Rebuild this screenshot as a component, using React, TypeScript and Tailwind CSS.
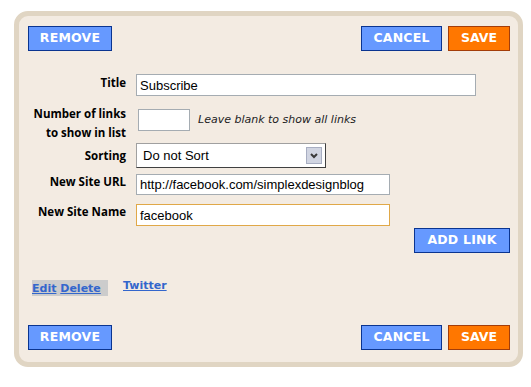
import React from 'react';

const labelFont = { fontFamily: '"DejaVu Sans", sans-serif' };
const formLabelFont = { fontFamily: '"Open Sans", "DejaVu Sans", sans-serif' };

function BlueButton({ label, className = '' }: { label: string; className?: string }) {
  return (
    <button
      className={`h-[25px] bg-[#6699ff] border border-[#0a3490] text-white font-bold text-[12.5px] tracking-[0.2px] font-['Verdana','DejaVu_Sans',sans-serif] flex items-center justify-center ${className}`}
    >
      {label}
    </button>
  );
}

function SaveButton() {
  return (
    <button className="h-[25px] w-[62px] bg-[#ff7700] border border-[#a33d0a] text-white font-bold text-[12.5px] font-['Verdana','DejaVu_Sans',sans-serif] flex items-center justify-center">
      SAVE
    </button>
  );
}

function Label({ children, className = '' }: { children: React.ReactNode; className?: string }) {
  return (
    <div
      className={`w-[98px] shrink-0 text-right text-[11.5px] font-bold text-black leading-[14px] ${className}`}
      style={formLabelFont}
    >
      {children}
    </div>
  );
}

function TextBox({ value, className = '' }: { value: string; className?: string }) {
  return (
    <div
      className={`bg-white border border-[#a5acb2] text-[13px] text-black leading-none flex items-center pl-[3px] font-['Liberation_Sans',Arial,sans-serif] ${className}`}
    >
      {value}
    </div>
  );
}

export default function App() {
  return (
    <div className="w-[531px] h-[387px] bg-white pl-[14px] pt-[11px]">
      <div className="w-[509px] h-[356px] border-[5px] border-[#e0d5c3] rounded-[14px] bg-[#f3ebe2] pl-[9px] pr-[8px] pt-[10px]">
        {/* top buttons */}
        <div className="flex justify-between">
          <BlueButton label="REMOVE" className="w-[84px]" />
          <div className="flex gap-[6px]">
            <BlueButton label="CANCEL" className="w-[81px]" />
            <SaveButton />
          </div>
        </div>

        {/* form */}
        <div className="mt-[23px] flex items-start gap-[10px]">
          <Label className="pt-[2px]">Title</Label>
          <TextBox value="Subscribe" className="w-[340px] h-[22px]" />
        </div>

        <div className="mt-[8px] flex items-start gap-[10px]">
          <Label className="leading-[19px]">
            Number of links
            <br />
            to show in list
          </Label>
          <div className="mt-[5px] flex items-center">
            <div className="ml-[2px] w-[52px] h-[22px] bg-white border border-[#a5acb2]" />
            <span className="ml-[8px] text-[11px] italic text-[#222]" style={labelFont}>
              Leave blank to show all links
            </span>
          </div>
        </div>

        <div className="mt-[1px] flex items-start gap-[10px]">
          <Label className="pt-[6px]">Sorting</Label>
          <div className="w-[190px] h-[25px] bg-white border border-t-[#a0a0a0] border-l-[#a0a0a0] border-r-[#404040] border-b-[#404040] flex items-center pl-[6px] pr-[3px] justify-between font-['Liberation_Sans',Arial,sans-serif] text-[13px]">
            <span>Do not Sort</span>
            <span className="w-[16px] h-[17px] bg-[#d1d5e2] border border-[#a8aec2] flex items-center justify-center">
              <svg width="8" height="6" viewBox="0 0 8 6">
                <path d="M1 1 L4 4 L7 1" stroke="#3a3a3a" strokeWidth="2" fill="none" />
              </svg>
            </span>
          </div>
        </div>

        <div className="mt-[6px] flex items-start gap-[10px]">
          <Label className="pt-[1px]">New Site URL</Label>
          <TextBox value="http://facebook.com/simplexdesignblog" className="w-[254px] h-[21px]" />
        </div>

        <div className="mt-[9px] flex items-start gap-[10px]">
          <Label className="pt-[1px]">New Site Name</Label>
          <TextBox value="facebook" className="w-[254px] h-[22px] !border-[#e0a848]" />
        </div>

        <div className="mt-[2px] flex justify-end">
          <BlueButton label="ADD LINK" className="w-[96px] h-[24px]" />
        </div>

        {/* link list */}
        <div className="mt-[27px] flex items-start">
          <div
            className="ml-[4px] w-[76px] h-[16px] bg-[#cccccc] text-[11px] font-bold text-[#3366cc] flex items-end leading-[14px]"
            style={labelFont}
          >
            <a className="underline">Edit</a>
            <span>&nbsp;</span>
            <a className="underline">Delete</a>
          </div>
          <a
            className="ml-[15px] mt-[-1px] text-[11px] font-bold text-[#3366cc] underline leading-[14px]"
            style={labelFont}
          >
            Twitter
          </a>
        </div>

        {/* bottom buttons */}
        <div className="mt-[29px] flex justify-between">
          <BlueButton label="REMOVE" className="w-[84px]" />
          <div className="flex gap-[6px]">
            <BlueButton label="CANCEL" className="w-[81px]" />
            <SaveButton />
          </div>
        </div>
      </div>
    </div>
  );
}
